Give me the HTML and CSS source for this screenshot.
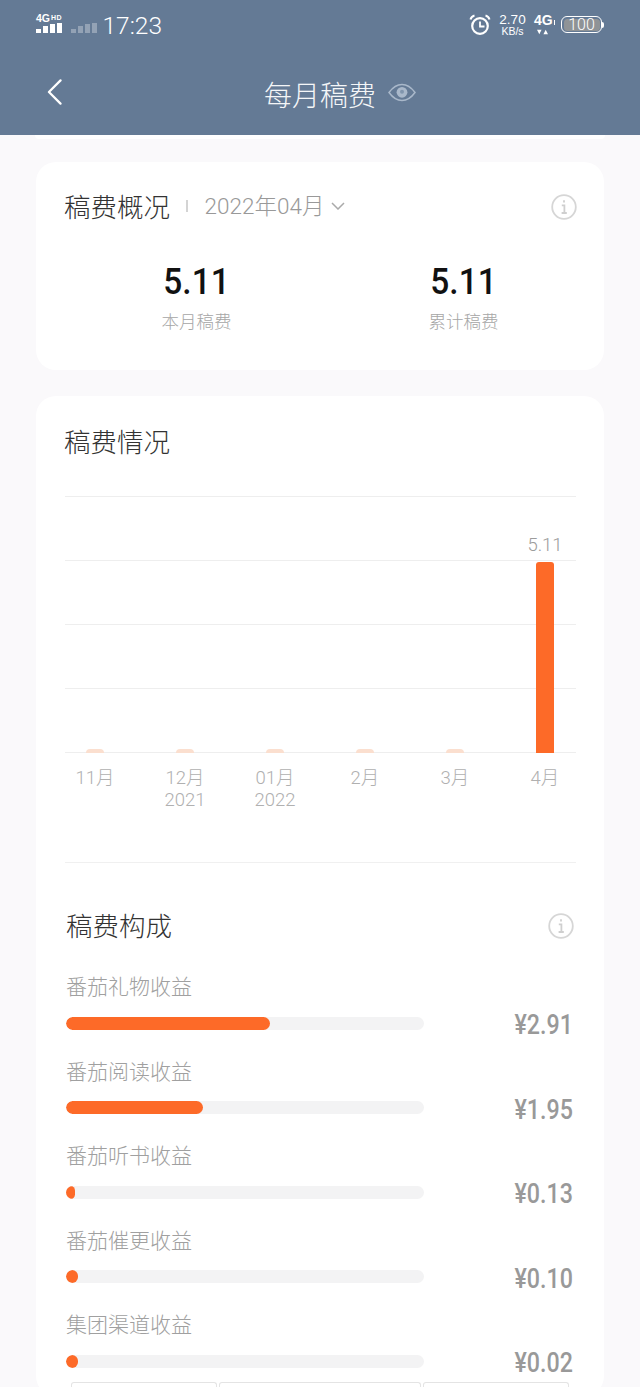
FILE: index.html
```html
<!DOCTYPE html>
<html lang="zh-CN">
<head>
<meta charset="utf-8">
<title>每月稿费</title>
<link rel="stylesheet" href="styles.css">
</head>
<body>
<div class="screen">
  <header class="header">
    <div class="status">
      <div class="status-left">
        <div class="signal">
          <div class="net"><span class="net-4g">4G</span><span class="net-hd">HD</span></div>
          <div class="bars"><i class="b1"></i><i class="b2"></i><i class="b3"></i><i class="b4"></i></div>
        </div>
        <div class="bars dim"><i class="b1"></i><i class="b2"></i><i class="b3"></i><i class="b4"></i></div>
        <span class="time">17:23</span>
      </div>
      <div class="status-right">
        <svg class="alarm" viewBox="0 0 22 22" fill="none" stroke="#fff">
          <circle cx="11" cy="12" r="7.8" stroke-width="2.2"/>
          <path d="M11 7.5V12.5H15.5" stroke-width="1.8"/>
          <path d="M1.5 5.5C2 3.5 3.5 2 5.5 1.5M20.5 5.5C20 3.5 18.500 2 16.500 1.500" stroke-width="2"/>
        </svg>
        <div class="speed"><span class="speed-num">2.70</span><span class="speed-unit">KB/s</span></div>
        <div class="net2">
          <div class="net2-top"><span class="net2-4g">4G</span><i class="net2-tick"></i></div>
          <svg class="arrows" viewBox="0 0 12 6" fill="#fff"><path d="M0 0.500H5L2.500 5.500ZM7 5.500H12L9.500 0.500Z"/></svg>
        </div>
        <div class="battery"><div class="battery-body"><span>100</span></div><i class="battery-tip"></i></div>
      </div>
    </div>
    <div class="nav">
      <svg class="back" viewBox="0 0 16 28" fill="none" stroke="#fff" stroke-width="2.4" stroke-linecap="round" stroke-linejoin="round"><path d="M14.500 1.500L2 14L14.500 26.500"/></svg>
      <h1 class="nav-title">每月稿费</h1>
      <svg class="eye" viewBox="0 0 28 18"><path d="M1 9C5 3.500 9.500 1 14 1S23 3.500 27 9C23 14.500 18.500 17 14 17S5 14.500 1 9Z" fill="none" stroke="#a9b8ca" stroke-width="1.500"/><circle cx="14" cy="8.800" r="5.400" fill="#a9b8ca"/><circle cx="14" cy="8.300" r="2" fill="#8095ad"/></svg>
    </div>
  </header>

  <div class="peek"></div>

  <main class="content">
    <section class="card card-summary">
      <div class="summary-head">
        <h2 class="title">稿费概况</h2>
        <i class="sep"></i>
        <span class="date">2022年04月</span>
        <svg class="chev" viewBox="0 0 14 8" fill="none" stroke="#aaa" stroke-width="1.500"><path d="M1 1L7 7L13 1"/></svg>
        <svg class="info" viewBox="0 0 26 26" fill="none"><circle cx="13" cy="13" r="11.800" stroke="#d6d6d6" stroke-width="1.800"/><path d="M13 6.200V8.600M10.800 11.300H13.400V18.800M10.600 19H15.800" stroke="#cfcfcf" stroke-width="1.800"/></svg>
      </div>
      <div class="stats">
        <div class="stat"><div class="stat-num">5.11</div><div class="stat-label">本月稿费</div></div>
        <div class="stat"><div class="stat-num">5.11</div><div class="stat-label">累计稿费</div></div>
      </div>
    </section>

    <section class="card card-detail">
      <h2 class="title detail-title">稿费情况</h2>
      <div class="chart">
        <div class="plot">
          <div class="col"><i class="bar stub"></i></div>
          <div class="col"><i class="bar stub"></i></div>
          <div class="col"><i class="bar stub"></i></div>
          <div class="col"><i class="bar stub"></i></div>
          <div class="col"><i class="bar stub"></i></div>
          <div class="col"><span class="bar-value">5.11</span><i class="bar full"></i></div>
        </div>
        <div class="axis">
          <span>11月</span>
          <span>12月<br>2021</span>
          <span>01月<br>2022</span>
          <span>2月</span>
          <span>3月</span>
          <span>4月</span>
        </div>
      </div>
      <div class="divider"></div>

      <div class="comp-head">
        <h2 class="title">稿费构成</h2>
        <svg class="info" viewBox="0 0 26 26" fill="none"><circle cx="13" cy="13" r="11.800" stroke="#d6d6d6" stroke-width="1.800"/><path d="M13 6.200V8.600M10.800 11.300H13.400V18.800M10.600 19H15.800" stroke="#cfcfcf" stroke-width="1.800"/></svg>
      </div>
      <div class="rows">
        <div class="row"><div class="row-label">番茄礼物收益</div><div class="track"><i class="fill" style="width:204px"></i></div><div class="amount"><span>¥2.91</span></div></div>
        <div class="row"><div class="row-label">番茄阅读收益</div><div class="track"><i class="fill" style="width:137px"></i></div><div class="amount"><span>¥1.95</span></div></div>
        <div class="row"><div class="row-label">番茄听书收益</div><div class="track"><i class="fill" style="width:9px"></i></div><div class="amount"><span>¥0.13</span></div></div>
        <div class="row"><div class="row-label">番茄催更收益</div><div class="track"><i class="fill" style="width:12px"></i></div><div class="amount"><span>¥0.10</span></div></div>
        <div class="row"><div class="row-label">集团渠道收益</div><div class="track"><i class="fill" style="width:12px"></i></div><div class="amount"><span>¥0.02</span></div></div>
      </div>
      <div class="table-top"><i class="cell c1"></i><i class="cell c2"></i><i class="cell c3"></i></div>
    </section>
  </main>
</div>
</body>
</html>
```

FILE: styles.css
```css
* { box-sizing: border-box; }
html, body { margin: 0; padding: 0; }
body {
  width: 640px;
  height: 1387px;
  overflow: hidden;
  background: #faf9fb;
  font-family: "Noto Sans CJK SC", "Noto Sans", sans-serif;
}
i { display: block; }
h1, h2 { margin: 0; font-weight: 300; }

.screen { width: 640px; height: 1387px; overflow: hidden; }

/* header */
.header { height: 135px; background: #647a95; color: #fff; }
.status {
  height: 52px;
  display: flex;
  justify-content: space-between;
  align-items: flex-start;
  padding: 13px 36px 0;
}
.status-left { display: flex; align-items: flex-start; height: 26px; }
.signal { width: 35px; padding-top: 1px; }
.net { display: flex; align-items: flex-start; height: 9px; font-family: "Liberation Sans", sans-serif; font-weight: 700; line-height: 9px; }
.net-4g { font-size: 10.500px; }
.net-hd { font-size: 7px; line-height: 7px; margin-left: 1px; letter-spacing: .4px; }
.bars { display: flex; align-items: flex-end; gap: 2.500px; height: 10px; }
.bars i { width: 4.500px; background: #fff; }
.b1 { height: 4px; }
.b2 { height: 7px; }
.b3 { height: 9px; }
.b4 { height: 10px; }
.bars.dim { opacity: .3; margin-top: 10px; }
.time {
  margin-left: 6px;
  font-family: Roboto, sans-serif;
  font-size: 24.500px;
  font-weight: 300;
  line-height: 26px;
}
.status-right { display: flex; align-items: flex-start; }
.alarm { width: 22px; height: 22px; margin-top: 1px; }
.speed {
  margin-left: 8px;
  width: 27px;
  display: flex;
  flex-direction: column;
  align-items: center;
  font-family: "Liberation Sans", sans-serif;
  color: #fff;
}
.speed-num { font-size: 13.500px; line-height: 13px; }
.speed-unit { font-size: 10.500px; line-height: 11px; }
.net2 { margin-left: 8px; width: 20px; display: flex; flex-direction: column; }
.net2-top { display: flex; align-items: flex-end; height: 14px; }
.net2-4g { font-family: "Liberation Sans", sans-serif; font-weight: 700; font-size: 14px; line-height: 14px; }
.net2-tick { width: 1px; height: 5px; background: #fff; margin: 0 0 2px 1px; }
.arrows { width: 11px; height: 6px; margin: 2px 0 0 3px; }
.battery { margin-left: 7px; display: flex; align-items: center; margin-top: 3px; }
.battery-body {
  width: 41px;
  height: 17px;
  border: 1.500px solid #fff;
  border-radius: 6px;
  display: flex;
  align-items: center;
  justify-content: center;
  background: #8f9396;
  background-clip: content-box;
  padding: 1.500px;
}
.battery-body span { font-family: Roboto, sans-serif; font-size: 16px; font-weight: 300; line-height: 12px; color: #fff; }
.battery-tip { width: 2px; height: 6px; background: #fff; border-radius: 0 2px 2px 0; }

.nav {
  position: relative;
  height: 83px;
  display: flex;
  align-items: center;
  justify-content: center;
}
.back { position: absolute; left: 47px; top: 27px; width: 15px; height: 26px; }
.nav-title { font-size: 28px; line-height: 40px; color: #f4f6f8; font-weight: 300; }
.eye { position: absolute; left: 388px; top: 31px; width: 28px; height: 19px; }

/* content */
.peek { height: 4px; margin: 0 35px; background: #fff; border-radius: 0 0 14px 14px; }
.content { padding: 23px 36px 0; display: flex; flex-direction: column; gap: 26px; }
.card { background: #fff; border-radius: 20px; }
.card-summary { height: 208px; padding-top: 27px; }
.title { font-size: 26.500px; line-height: 34px; color: #333; font-weight: 300; white-space: nowrap; }
.summary-head { display: flex; align-items: center; height: 34px; padding: 0 27px 0 28px; }
.sep { width: 1.500px; height: 12px; background: #d4d4d4; margin-left: 16px; }
.date {
  margin-left: 17px;
  font-family: Roboto, "Noto Sans CJK SC", sans-serif;
  font-size: 22.500px;
  font-weight: 300;
  line-height: 34px;
  color: #999;
}
.chev { width: 14px; height: 8px; margin-left: 7px; }
.info { width: 26px; height: 26px; margin-left: auto; flex: none; position: relative; top: 1px; }

.stats { display: grid; grid-template-columns: 267px 267px; padding: 0 0 0 27px; margin-top: 39px; }
.stat { text-align: center; }
.stat-num {
  font-family: Roboto, sans-serif;
  font-size: 36px;
  font-weight: 500;
  line-height: 40px;
  color: #111;
  transform: scaleX(.93);
}
.stat-label { margin-top: 7px; font-size: 17.500px; font-weight: 300; line-height: 24px; color: #a6a6a6; }

.card-detail { height: 1000px; padding: 28px 28px 0 28px; }
.chart { margin-top: 38px; }
.plot {
  height: 257px;
  width: 511px;
  margin-left: 1px;
  display: grid;
  grid-template-columns: repeat(6, 90px);
  background-image: repeating-linear-gradient(to bottom, #eeeeee 0, #eeeeee 1px, transparent 1px, transparent 64px);
}
.col { display: flex; flex-direction: column; align-items: center; justify-content: flex-end; position: relative; left: -15px; }
.bar { width: 18px; }
.stub { height: 4px; background: #fbdfcf; border-radius: 4px 4px 0 0; }
.full { height: 191px; background: #fd6a28; border-radius: 3px 3px 0 0; }
.bar-value { font-family: Roboto, sans-serif; font-size: 18.500px; font-weight: 300; color: #9c9c9c; line-height: 22px; margin-bottom: 6px; }
.axis {
  display: grid;
  grid-template-columns: repeat(6, 90px);
  margin: 14px 0 0 -14px;
  width: 540px;
  height: 95px;
  font-family: Roboto, "Noto Sans CJK SC", sans-serif;
  font-size: 18.500px;
  font-weight: 300;
  line-height: 22px;
  color: #b0b0b0;
  text-align: center;
}
.divider { height: 1px; background: #f0f0f0; width: 511px; margin-left: 1px; }
.comp-head { display: flex; align-items: center; height: 34px; margin: 45px 0 0 2px; padding-right: 2px; width: 510px; }
.rows { margin-top: 28px; }
.row { display: grid; grid-template-columns: 358px 1fr; grid-template-rows: 30px 23px; height: 84.500px; margin-left: 2px; }
.row-label { grid-column: 1 / 3; font-size: 21px; font-weight: 300; line-height: 30px; color: #a0a0a0; }
.track { height: 13px; margin-top: 16.500px; background: #f3f3f4; border-radius: 7px; overflow: hidden; grid-row: 2; }
.fill { height: 13px; background: #fd6a28; border-radius: 7px; }
.amount {
  grid-row: 2;
  margin-top: 10px;
  font-family: Roboto, sans-serif;
  font-size: 27px;
  font-weight: 500;
  line-height: 30px;
  color: #999;
  text-align: right;
  padding-right: 3px;
}
.amount span { display: inline-block; transform: scaleX(.86); transform-origin: right center; }
.table-top { display: flex; gap: 2px; margin: -10.500px 0 0 7px; }
.cell { height: 10px; border: 1px solid #e4e4e4; border-bottom: 0; border-radius: 3px 3px 0 0; background: #fff; }
.c1 { width: 146px; }
.c2 { width: 202px; }
.c3 { width: 146px; }
```
